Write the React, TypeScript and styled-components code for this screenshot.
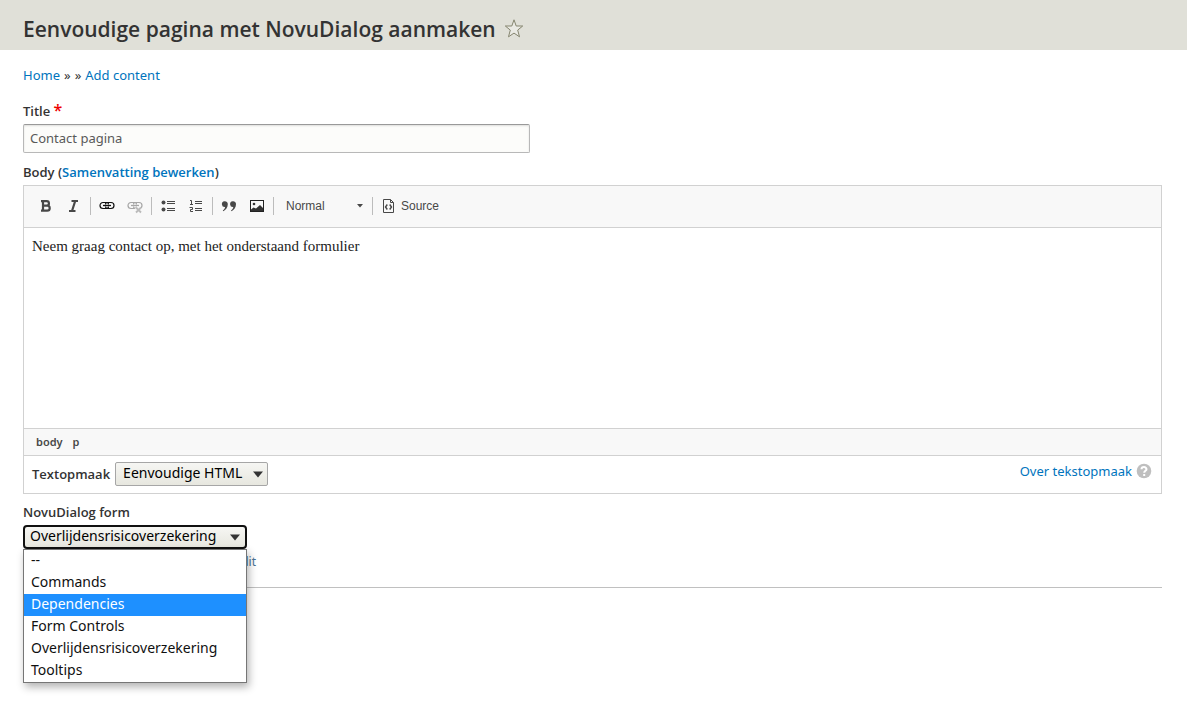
import React, { useState } from "react";
import styled, { createGlobalStyle } from "styled-components";

const sans = `"Noto Sans", "Open Sans", sans-serif`;
const heading = `"Open Sans", "Noto Sans", sans-serif`;

const GlobalStyle = createGlobalStyle`
  *, *::before, *::after { box-sizing: border-box; }
  body { margin: 0; background: #fff; color: #333; font: 13px/20px ${sans}; }
  ul, ol, h1, p { margin: 0; padding: 0; list-style: none; }
  button, input, select { font-family: inherit; margin: 0; }
`;

const Page = styled.div`
  min-height: 100vh;
`;

const Header = styled.header`
  display: flex;
  align-items: center;
  gap: 8px;
  height: 50px;
  padding: 8px 23px 0;
  background: #e0e0d8;
`;

const PageTitle = styled.h1`
  font: 600 21px/28px ${heading};
  color: #333;
`;

const IconButton = styled.button`
  display: flex;
  padding: 0;
  border: 0;
  background: none;
  cursor: pointer;
`;

const Main = styled.main`
  padding: 15px 25px 0 23px;
`;

const Link = styled.a`
  color: #0074bd;
  text-decoration: none;
`;

const Breadcrumb = styled.nav`
  display: flex;
  gap: 4px;
  margin-bottom: 16px;
`;

const Label = styled.label`
  display: block;
  font-family: ${heading};
  font-weight: 600;
`;

const Required = styled.span`
  color: #e00;
  font-size: 16px;
  line-height: 16px;
`;

const TitleInput = styled.input`
  display: block;
  width: 507px;
  max-width: 100%;
  height: 29px;
  margin: 3px 0 9px;
  padding: 0 6px 2px;
  border: 1px solid #b8b8b8;
  border-top-color: #999;
  border-radius: 2px;
  background: #fcfcfa;
  box-shadow: inset 0 1px 2px rgba(0, 0, 0, 0.12);
  color: #595959;
  font-size: 13px;
`;

const Editor = styled.section`
  margin-top: 3px;
  border: 1px solid #d1d1d1;
`;

const Toolbar = styled.div`
  display: flex;
  align-items: center;
  height: 42px;
  padding: 0 8px 2px;
  border-bottom: 1px solid #d1d1d1;
  background: #f8f8f8;
`;

const ToolGroup = styled.div`
  display: flex;
  align-items: center;
  height: 18px;
  padding-right: 2px;
  & + & {
    padding-left: 2px;
    border-left: 1px solid #bcbcbc;
  }
`;

const Tool = styled.button<{ $faded?: boolean }>`
  display: flex;
  align-items: center;
  justify-content: center;
  gap: 4px;
  min-width: 28px;
  height: 28px;
  padding: 0 6px;
  border: 0;
  background: none;
  color: #484848;
  font: 12px/16px "Liberation Sans", sans-serif;
  opacity: ${(p) => (p.$faded ? 0.35 : 1)};
`;

const StyleSelect = styled.select`
  appearance: none;
  width: 85px;
  border: 0;
  padding: 0;
  background: none;
  color: #484848;
  font: 12px/16px "Liberation Sans", sans-serif;
`;

const StyleBox = styled.span`
  display: flex;
  align-items: center;
  padding: 0 7px 0 10px;
  & > svg { margin-left: -14px; pointer-events: none; }
`;

const Content = styled.div`
  min-height: 200px;
  padding: 8px;
  color: #222;
  font: 15px/20px "Liberation Serif", serif;
`;

const ElementPath = styled.div`
  display: flex;
  gap: 10px;
  height: 28px;
  padding: 3px 12px;
  border: solid #d1d1d1;
  border-width: 1px 0;
  background: #f8f8f8;
  color: #484848;
  font: 600 11px/20px ${sans};
`;

const FormatRow = styled.div`
  display: flex;
  justify-content: space-between;
  align-items: center;
  height: 37px;
  padding: 0 9px 2px 8px;
`;

const FormatField = styled.div`
  display: flex;
  align-items: center;
  gap: 5px;
`;

const HelpLink = styled(Link)`
  display: flex;
  align-items: center;
  gap: 4px;
  margin-bottom: 6px;
`;

const SelectWrap = styled.span`
  position: relative;
  display: inline-flex;
`;

const Select = styled.select<{ $open?: boolean; $width: number }>`
  appearance: none;
  width: ${(p) => p.$width}px;
  height: 24px;
  padding: 0 20px 2px ${(p) => (p.$open ? 5 : 7)}px;
  border: ${(p) => (p.$open ? "2px solid #101010" : "1px solid #a6a6a6")};
  border-radius: ${(p) => (p.$open ? 4 : 2)}px;
  outline: 0;
  background: linear-gradient(#f6f6f3, #e7e7df);
  color: #000;
  font-size: 14px;
  line-height: 18px;
`;

const CaretIcon = styled.svg<{ $right: number }>`
  position: absolute;
  right: ${(p) => p.$right}px;
  top: 9px;
  pointer-events: none;
`;

const FormField = styled.div`
  margin-top: 8px;
  padding-bottom: 15px;
  border-bottom: 1px solid #c0c0c0;
`;

const FieldSelect = styled.div`
  display: flex;
  margin-top: 3px;
`;

const Options = styled.ul`
  position: absolute;
  top: 100%;
  left: 0;
  width: 100%;
  border: 1px solid #767676;
  background: #fff;
  box-shadow: 2px 4px 8px rgba(0, 0, 0, 0.3);
`;

const Option = styled.li<{ $active: boolean }>`
  height: 22px;
  padding: 0 7px;
  background: ${(p) => (p.$active ? "#1e90ff" : "#fff")};
  color: ${(p) => (p.$active ? "#fff" : "#101010")};
  font-size: 14px;
  line-height: 20px;
`;

const Hint = styled.p`
  width: 233px;
  margin-top: 3px;
  text-align: right;
  font-size: 12px;
`;

const HintLink = styled(Link)`
  color: #4a7396;
`;

const Caret = ({ right }: { right: number }) => (
  <CaretIcon $right={right} width="10" height="7" viewBox="0 0 10 7"><path d="M0 .5h10L5 6.500z" fill="#333" /></CaretIcon>
);

const Icon = ({ children }: { children: React.ReactNode }) => (
  <svg width="16" height="16" viewBox="0 0 16 16" fill="none" stroke="#484848">{children}</svg>
);

const Chain = () => (
  <g stroke="#111">
    <path d="M9.500 6.500C9.500 5.300 8.500 4.500 7.500 4.500H4a3 3 0 000 6h3.500c1 0 2-.8 2-2" strokeWidth="1.200" />
    <path d="M6.500 6.500c0-1.200 1-2 2-2H12a3 3 0 010 6H8.500c-1 0-2-.8-2-2" strokeWidth="1.200" />
    <path d="M4 7.500h8" strokeWidth="1.300" />
  </g>
);

const forms = ["--", "Commands", "Dependencies", "Form Controls", "Overlijdensrisicoverzekering", "Tooltips"];

export default function App() {
  const [form, setForm] = useState("Overlijdensrisicoverzekering");
  const [active, setActive] = useState("Dependencies");
  const [title, setTitle] = useState("Contact pagina");

  return (
    <Page>
      <GlobalStyle />
      <Header>
        <PageTitle>Eenvoudige pagina met NovuDialog aanmaken</PageTitle>
        <IconButton aria-label="Favoriet">
          <svg width="20" height="20" viewBox="0 0 20 20" fill="#eaeae4" stroke="#85856f" strokeLinejoin="round">
            <path d="M10 .8l2.200 6.200h6.500l-5 4.100 1.800 6.700-5.500-3.700-5.500 3.700 1.800-6.700-5-4.100h6.500z" />
          </svg>
        </IconButton>
      </Header>
      <Main>
        <Breadcrumb>
          <Link href="#home">Home</Link><span>»</span><span>»</span><Link href="#add">Add content</Link>
        </Breadcrumb>
        <Label htmlFor="title">Title <Required>*</Required></Label>
        <TitleInput id="title" value={title} onChange={(e) => setTitle(e.target.value)} />
        <Label as="div">Body (<Link href="#summary">Samenvatting bewerken</Link>)</Label>
        <Editor>
          <Toolbar>
            <ToolGroup>
              <Tool aria-label="Vet">
                <Icon><path d="M5 3.200h3.700a2.200 2.200 0 010 4.500H5zM5 7.700h4.200a2.500 2.500 0 010 5H5zM3 3.200h2M3 12.700h2" strokeWidth="2.200" /></Icon>
              </Tool>
              <Tool aria-label="Cursief">
                <Icon><path d="M5.500 3h6.500M3 13h6.500M9.200 3L6 13" strokeWidth="2.200" /></Icon>
              </Tool>
            </ToolGroup>
            <ToolGroup>
              <Tool aria-label="Link"><Icon><Chain /></Icon></Tool>
              <Tool aria-label="Link verwijderen" $faded>
                <Icon><Chain /><path d="M9 9.500l5 5M14 9.500l-5 5" stroke="#f8f8f8" strokeWidth="4" /><path d="M9 9.500l5 5M14 9.500l-5 5" strokeWidth="1.800" /></Icon>
              </Tool>
            </ToolGroup>
            <ToolGroup>
              <Tool aria-label="Opsomming">
                <Icon>
                  <circle cx="3.500" cy="4.500" r="2" fill="#484848" stroke="none" />
                  <circle cx="3.500" cy="11.500" r="2" fill="#484848" stroke="none" />
                  <path d="M7 3.500h8M7 5.500h8M7 10.500h8M7 12.500h8" />
                </Icon>
              </Tool>
              <Tool aria-label="Genummerde lijst">
                <Icon>
                  <path d="M2 2.500h1.500v4M2 6.500h3M1.500 9.500h3v2h-2v2h2.500M7 3.500h7M7 5.500h7M7 10.500h7M7 12.500h7" />
                </Icon>
              </Tool>
            </ToolGroup>
            <ToolGroup>
              <Tool aria-label="Citaat">
                <Icon>
                  <path d="M3.500 3.200A2.900 2.900 0 016.800 6.300c0 3.200-2 5.800-4.500 7l-.5-.8c1.300-.9 2.100-2.100 2.300-3.500A2.900 2.900 0 013.500 3.200zM11.700 3.200A2.900 2.900 0 0115 6.300c0 3.200-2 5.800-4.500 7l-.5-.8c1.300-.9 2.100-2.100 2.300-3.500A2.900 2.900 0 0111.700 3.200z" fill="#484848" stroke="none" />
                </Icon>
              </Tool>
              <Tool aria-label="Afbeelding">
                <Icon>
                  <rect x="1.500" y="2.500" width="13" height="11" stroke="#222" />
                  <path d="M2 11.500l2.500-2 2.500 1L11 7l3 3v3H2z" fill="#333" stroke="none" />
                  <circle cx="5" cy="6" r="1.300" fill="#333" stroke="none" />
                </Icon>
              </Tool>
            </ToolGroup>
            <ToolGroup>
              <StyleBox>
                <StyleSelect aria-label="Opmaak"><option>Normal</option></StyleSelect>
                <svg width="6" height="4" viewBox="0 0 6 4"><path d="M0 0h6L3 3.500z" fill="#484848" /></svg>
              </StyleBox>
            </ToolGroup>
            <ToolGroup>
              <Tool>
                <Icon>
                  <path d="M2.500 1.500h7l3 3v10h-10zM9.500 1.500v3h3" />
                  <path d="M6.300 6.500L4.500 9l1.800 2.500M8.700 6.500L10.500 9l-1.800 2.500" strokeWidth="1.400" />
                </Icon>
                Source
              </Tool>
            </ToolGroup>
          </Toolbar>
          <Content contentEditable suppressContentEditableWarning role="textbox" aria-label="Body">
            <p>Neem graag contact op, met het onderstaand formulier</p>
          </Content>
          <ElementPath><span>body</span><span>p</span></ElementPath>
          <FormatRow>
            <FormatField>
              <Label htmlFor="format">Textopmaak</Label>
              <SelectWrap>
                <Select id="format" $width={153}><option>Eenvoudige HTML</option></Select>
                <Caret right={5} />
              </SelectWrap>
            </FormatField>
            <HelpLink href="#help">
              Over tekstopmaak
              <svg width="16" height="16" viewBox="0 0 16 16">
                <circle cx="8" cy="8" r="7.300" fill="#bfbfbf" />
                <path d="M5.500 6.300a2.500 2.300 0 115 0c0 1.500-2.300 1.600-2.300 3.500M8.200 11v2" fill="none" stroke="#fff" strokeWidth="2" />
              </svg>
            </HelpLink>
          </FormatRow>
        </Editor>
        <FormField>
          <Label htmlFor="form">NovuDialog form</Label>
          <FieldSelect>
            <SelectWrap>
              <Select id="form" $open $width={224} value={form} onChange={(e) => setForm(e.target.value)}>
                {forms.map((f) => <option key={f}>{f}</option>)}
              </Select>
              <Caret right={7} />
              <Options role="listbox" aria-label="NovuDialog form">
                {forms.map((f) => (
                  <Option
                    key={f}
                    role="option"
                    aria-selected={f === form}
                    $active={f === active}
                    onMouseEnter={() => setActive(f)}
                    onClick={() => setForm(f)}
                  >
                    {f}
                  </Option>
                ))}
              </Options>
            </SelectWrap>
          </FieldSelect>
          <Hint><HintLink href="#edit">Edit</HintLink></Hint>
        </FormField>
      </Main>
    </Page>
  );
}
